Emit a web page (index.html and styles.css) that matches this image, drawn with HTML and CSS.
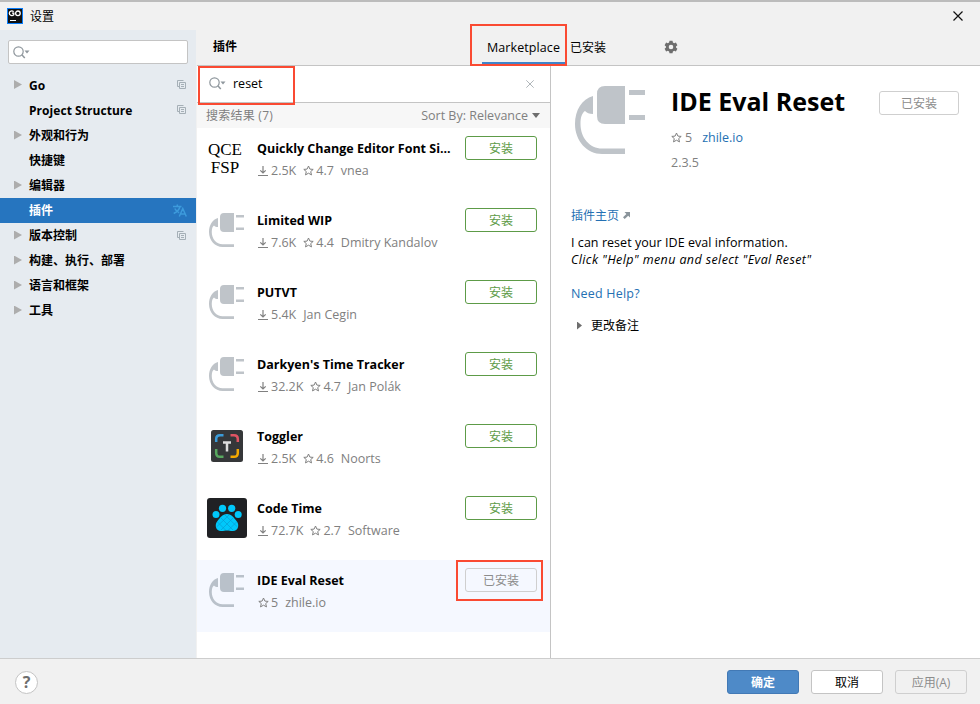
FILE: index.html
```html
<!DOCTYPE html>
<html lang="zh-CN">
<head>
<meta charset="utf-8">
<title>设置</title>
<link rel="stylesheet" href="styles.css">
</head>
<body>
<svg class="defs" aria-hidden="true">
  <symbol id="plug" viewBox="0 0 70 68"><path d="M50 0H30Q22 0 22 8V30Q22 38 30 38H50ZM54 4H70V9H54ZM54 29H70V34H54ZM18 10C7 13 0 24 0 38C0 55 12 68 27 68H50V62.500H27C15 62.500 5.500 52 5.500 38C5.500 31 7 27 10 25C12 27 14 28 18 28Z" fill="currentColor"/></symbol>
  <symbol id="star" viewBox="0 0 11 11"><path d="M5.500 1L6.900 4.100L10.200 4.400L7.700 6.600L8.500 9.900L5.500 8.200L2.500 9.900L3.300 6.600L.8 4.400L4.100 4.100Z" fill="none" stroke="currentColor"/></symbol>
  <symbol id="down" viewBox="0 0 10 10"><path d="M5 0V7M2.300 4.300L5 7L7.700 4.300M0 9.500H10" fill="none" stroke="currentColor" stroke-width="1.200"/></symbol>
  <symbol id="copy" viewBox="0 0 9 9"><path d="M2.500 2.500H8.500V8.500H2.500ZM6.500 .5H.5V6.500H2.500M4 4.500H7M4 6.500H7" fill="none" stroke="#a5afb6"/></symbol>
  <symbol id="search" viewBox="0 0 17 13"><circle cx="5.500" cy="5.500" r="4.700" fill="none" stroke="#8f979d" stroke-width="1.200"/><path d="M9 9L11.800 12" stroke="#8f979d" stroke-width="1.500"/><path d="M11.500 4.500H16.500L14 7.500Z" fill="#8f979d"/></symbol>
</svg>
<div class="window">
  <header class="titlebar">
    <svg class="logo" viewBox="0 0 16 16"><path d="M0 0H16V16H0Z" fill="#087cfa"/><path d="M1 1H15V15H1Z" fill="#111"/><path d="M6.600 3.700C5.200 2.200 2.300 2.900 2.300 5.200C2.300 7.700 5.300 8.200 6.800 6.700V5.200H5" fill="none" stroke="#fff" stroke-width="1.300"/><circle cx="10.900" cy="5.300" r="2.300" fill="none" stroke="#fff" stroke-width="1.300"/><path d="M3 12.500H9" stroke="#fff"/></svg>
    <span class="title">设置</span>
    <svg class="close" viewBox="0 0 10 10"><path d="M.5 .5L9.500 9.500M9.500 .5L.5 9.500" stroke="#111" stroke-width="1.200"/></svg>
  </header>
  <div class="main">
    <aside class="sidebar">
      <div class="side-search"><svg class="mag"><use href="#search"/></svg></div>
      <nav class="tree">
        <div class="node latin"><i class="arrow"></i><span>Go</span><svg class="copy"><use href="#copy"/></svg></div>
        <div class="node latin"><i class="arrow none"></i><span>Project Structure</span><svg class="copy"><use href="#copy"/></svg></div>
        <div class="node"><i class="arrow"></i><span>外观和行为</span></div>
        <div class="node"><i class="arrow none"></i><span>快捷键</span></div>
        <div class="node"><i class="arrow"></i><span>编辑器</span></div>
        <div class="node selected"><i class="arrow none"></i><span>插件</span><svg class="translate" viewBox="0 0 14 13"><path d="M0 2.500H8.500M4.300 .5V2.500M7 2.500C6.300 5.500 3.800 8 .7 9.500M1.800 4.500C2.700 6.500 4.500 8 6.200 8.700M6.300 12.500L9.800 4.500L13.300 12.500M7.500 10H12" fill="none" stroke="#3d9bdc" stroke-width="1.500"/></svg></div>
        <div class="node"><i class="arrow"></i><span>版本控制</span><svg class="copy"><use href="#copy"/></svg></div>
        <div class="node"><i class="arrow"></i><span>构建、执行、部署</span></div>
        <div class="node"><i class="arrow"></i><span>语言和框架</span></div>
        <div class="node"><i class="arrow"></i><span>工具</span></div>
      </nav>
    </aside>
    <section class="content">
      <div class="tabs">
        <b class="heading">插件</b>
        <span class="tab active">Marketplace</span>
        <span class="tab installed">已安装</span>
        <svg class="gear" viewBox="0 0 14 14"><path fill-rule="evenodd" d="M5.500 .7H8.500L8.900 2.500L10.200 3.200L11.900 2.600L13.400 5.200L12 6.400V7.600L13.400 8.800L11.900 11.400L10.200 10.800L8.900 11.500L8.500 13.300H5.500L5.100 11.500L3.800 10.800L2.100 11.400L.6 8.800L2 7.600V6.400L.6 5.200L2.100 2.600L3.800 3.200L5.100 2.500ZM7 4.700A2.300 2.300 0 1 0 7 9.300A2.300 2.300 0 1 0 7 4.700Z" fill="#6e6e6e"/></svg>
      </div>
      <div class="panes">
        <div class="list">
          <div class="query"><svg class="mag"><use href="#search"/></svg><span>reset</span><svg class="clear" viewBox="0 0 8 8"><path d="M.3 .3L7.700 7.700M7.700 .3L.3 7.700" stroke="#b0b6ba"/></svg></div>
          <div class="results"><span>搜索结果 (7)</span><span class="sort">Sort By: Relevance</span><i class="caret"></i></div>
          <div class="row"><div class="icon qce"><span>QCE</span><span>FSP</span></div><div class="info"><b>Quickly Change Editor Font Si...</b><p><svg class="down"><use href="#down"/></svg><span>2.5K</span><svg class="star"><use href="#star"/></svg><span>4.7</span><span>vnea</span></p></div><button class="btn green">安装</button></div>
          <div class="row"><div class="icon"><svg class="plug"><use href="#plug"/></svg></div><div class="info"><b>Limited WIP</b><p><svg class="down"><use href="#down"/></svg><span>7.6K</span><svg class="star"><use href="#star"/></svg><span>4.4</span><span>Dmitry Kandalov</span></p></div><button class="btn green">安装</button></div>
          <div class="row"><div class="icon"><svg class="plug"><use href="#plug"/></svg></div><div class="info"><b>PUTVT</b><p><svg class="down"><use href="#down"/></svg><span>5.4K</span><span>Jan Cegin</span></p></div><button class="btn green">安装</button></div>
          <div class="row"><div class="icon"><svg class="plug"><use href="#plug"/></svg></div><div class="info"><b>Darkyen's Time Tracker</b><p><svg class="down"><use href="#down"/></svg><span>32.2K</span><svg class="star"><use href="#star"/></svg><span>4.7</span><span>Jan Polák</span></p></div><button class="btn green">安装</button></div>
          <div class="row"><div class="icon"><svg class="full" viewBox="0 0 40 40"><rect x="4" y="4" width="32" height="32" rx="2.500" fill="#353739"/><g fill="none" stroke-width="2.500"><path d="M9.200 16V13Q9.200 9.200 13 9.200H16.500" stroke="#3b9bd8"/><path d="M23.500 9.200H27Q30.800 9.200 30.800 13V16" stroke="#e05463"/><path d="M9.200 23V27Q9.200 30.800 13 30.800H16.500" stroke="#58a75f"/><path d="M30.800 23V27Q30.800 30.800 27 30.800H23.500" stroke="#f4a900"/><path d="M16 16.500H24M20 16V25.500" stroke="#ddd"/></g></svg></div><div class="info"><b>Toggler</b><p><svg class="down"><use href="#down"/></svg><span>2.5K</span><svg class="star"><use href="#star"/></svg><span>4.6</span><span>Noorts</span></p></div><button class="btn green">安装</button></div>
          <div class="row"><div class="icon"><svg class="full" viewBox="0 0 40 40"><rect width="40" height="40" rx="3" fill="#202124"/><g fill="#00c8fa"><circle cx="9" cy="16.500" r="3.500"/><circle cx="15.500" cy="10.300" r="3.600"/><circle cx="24.700" cy="10.300" r="3.600"/><circle cx="31.200" cy="16.500" r="3.500"/><path d="M20 16C25 16 27 20 29.500 23C33 27 31 33 26 33C23 33 22 32.500 20 32.500S17 33 14 33C9 33 7 27 10.500 23C13 20 15 16 20 16Z"/></g><path d="M14 20L26 32M10.500 24L19 32.500M18 17L30.500 29M26 20L14 32M22 17L9.500 29M29.500 24L21 32.500" stroke="#0797ce" stroke-width=".6"/></svg></div><div class="info"><b>Code Time</b><p><svg class="down"><use href="#down"/></svg><span>72.7K</span><svg class="star"><use href="#star"/></svg><span>2.7</span><span>Software</span></p></div><button class="btn green">安装</button></div>
          <div class="row current"><div class="icon"><svg class="plug"><use href="#plug"/></svg></div><div class="info"><b>IDE Eval Reset</b><p><svg class="star"><use href="#star"/></svg><span>5</span><span>zhile.io</span></p></div><button class="btn gray">已安装</button></div>
        </div>
        <div class="detail">
          <div class="summary">
            <svg class="plug-big"><use href="#plug"/></svg>
            <div class="about"><h1>IDE Eval Reset</h1><p class="rating"><svg class="star"><use href="#star"/></svg><span>5</span><a>zhile.io</a></p><p class="version">2.3.5</p></div>
            <button class="btn gray wide">已安装</button>
          </div>
          <div class="homepage"><a>插件主页</a><svg class="ext" viewBox="0 0 7 7"><path d="M1.500 0H7V5.500L5.200 3.700L1.700 7L0 5.300L3.400 1.900Z" fill="#8a949b"/></svg></div>
          <p class="desc">I can reset your IDE eval information.</p>
          <p class="hint">Click "Help" menu and select "Eval Reset"</p>
          <a class="help-link">Need Help?</a>
          <div class="notes"><i class="arrow-small"></i><span>更改备注</span></div>
        </div>
      </div>
    </section>
  </div>
  <footer class="footer"><span class="help">?</span><button class="action primary">确定</button><button class="action">取消</button><button class="action disabled">应用(A)</button></footer>
  <div class="mark mark-tab"></div>
  <div class="mark mark-query"></div>
  <div class="mark mark-button"></div>
</div>
</body>
</html>
```
FILE: styles.css
```css
* { box-sizing: border-box; }
body { margin: 0; font: 12.5px/17px "Open Sans", "Noto Sans CJK SC", sans-serif; color: #000; }
p, h1 { margin: 0; }
svg { display: block; flex: none; }
button { font: inherit; padding: 0; margin: 0; }
a { color: #2470b3; }
.defs { position: absolute; width: 0; height: 0; }
.window { position: relative; width: 980px; height: 704px; display: flex; flex-direction: column; overflow: hidden; background: #f1f1f1; }
.titlebar { height: 30px; border-top: 2px solid #777; border-image: linear-gradient(#bcbcbc 50%, #707070 50%) 2; display: flex; align-items: center; padding: 0 17px 0 7px; }
.logo { width: 16px; height: 16px; }
.title { margin-left: 7px; font-size: 12px; }
.close { width: 10px; height: 10px; margin-left: auto; }
.main { display: flex; height: 628px; }
.sidebar { width: 196px; background: #e6ebf0; padding-top: 10px; }
.side-search { width: 180px; height: 24px; margin: 0 8px 9px; background: #fff; border: 1px solid #c4c4c4; border-radius: 2px; padding: 5px 4px; }
.mag { width: 17px; height: 13px; }
.node { height: 25px; display: flex; align-items: center; padding: 0 10px 1px 14px; font-size: 12px; font-weight: 700; }
.node span { padding-top: 1px; }
.latin { padding-bottom: 2px; letter-spacing: .05px; }
.arrow { width: 8px; height: 9px; margin-right: 7px; background: #adadad; clip-path: polygon(0 0, 100% 50%, 0 100%); }
.arrow.none { visibility: hidden; }
.copy { width: 9px; height: 9px; margin-left: auto; }
.selected { background: #2675bf; color: #fff; }
.translate { width: 14px; height: 13px; margin-left: auto; margin-right: -1px; }
.content { flex: 1; border-left: 1px solid #f1f1f1; }
.tabs { height: 36px; border-bottom: 1px solid #c4c4c4; display: flex; padding-left: 16px; }
.heading { width: 269px; font-size: 12px; padding-top: 8px; }
.tab { padding-top: 9px; }
.active { width: 84px; height: 35px; padding-left: 5px; border-bottom: 3px solid #4083c9; white-space: nowrap; letter-spacing: .08px; }
.installed { width: 98px; padding-left: 4px; font-size: 12px; }
.gear { width: 14px; height: 14px; margin-top: 10px; }
.panes { display: flex; height: 592px; background: #fff; }
.list { width: 354px; border-right: 1px solid #c4c4c4; }
.query { height: 37px; border-bottom: 1px solid #c4c4c4; display: flex; align-items: center; padding: 0 16px 1px 12px; }
.query span { margin-left: 7px; }
.clear { width: 8px; height: 8px; margin-left: auto; }
.results { height: 25px; background: #f7f7f7; color: #808080; display: flex; align-items: center; padding: 0 10px 0 9px; }
.results span:first-child { font-size: 12px; letter-spacing: .25px; }
.sort { margin-left: auto; }
.caret { width: 8px; height: 5px; margin-left: 4px; background: #6e6e6e; clip-path: polygon(0 0, 100% 0, 50% 100%); }
.row { height: 72px; display: flex; padding: 8px 13px 0 10px; }
.current { background: #f5f8ff; }
.icon { width: 40px; height: 40px; margin-top: 2px; }
.plug { width: 35px; height: 34px; margin: 3px 0 0 2px; color: #bfc4c9; }
.full { width: 40px; height: 40px; }
.current .plug { color: #b9c1ca; }
.qce { font: 17px/18px "Liberation Serif", serif; text-align: center; padding-top: 3px; margin-left: -2px; margin-right: 2px; }
.qce span { display: block; }
.info { width: 218px; padding: 4px 0 0 10px; white-space: nowrap; }
.info b { display: block; font-size: 12.5px; }
.info p { display: flex; align-items: center; margin-top: 5px; color: #808080; padding-left: 1px; }
.info .down { width: 10px; height: 10px; margin-right: 3px; }
.star { width: 11px; height: 11px; margin-right: 2px; color: #808080; }
.info span { margin-right: 7px; }
.btn { width: 72px; height: 24px; border-radius: 3px; background: #fff; font-size: 12px; line-height: 20px; padding-top: 2px; }
.green { border: 1px solid #5d9b47; color: #5d9b47; }
.gray { border: 1px solid #cfcfcf; color: #8c8c8c; }
.current .btn { background: #f5f8ff; }
.detail { flex: 1; padding: 20px 20px 0; }
.summary { display: flex; height: 121px; }
.plug-big { width: 70px; height: 68px; margin: 0 26px 0 4px; color: #bfc4c9; }
.about { width: 208px; color: #808080; }
.about h1 { color: #000; font-size: 25px; line-height: 30px; white-space: nowrap; }
.rating { display: flex; align-items: center; margin-top: 13px; }
.rating span { margin-left: 1px; }
.rating a { margin-left: 10px; }
.version { margin-top: 8px; }
.wide { width: 80px; margin-top: 5px; }
.homepage { display: flex; align-items: center; font-size: 12px; }
.ext { width: 7px; height: 7px; margin-left: 4px; }
.desc { margin-top: 10px; letter-spacing: .05px; }
.hint { font-style: italic; letter-spacing: .39px; }
.help-link { display: block; margin-top: 17px; letter-spacing: .2px; }
.notes { display: flex; align-items: center; margin-top: 15px; padding-left: 6px; font-size: 12px; }
.arrow-small { width: 5px; height: 8px; margin-right: 9px; background: #6e6e6e; clip-path: polygon(0 0, 100% 50%, 0 100%); }
.footer { height: 46px; border-top: 1px solid #cdcdcd; display: flex; align-items: center; gap: 12px; padding: 0 13px 0 15px; }
.help { width: 23px; height: 23px; margin: 1px auto 0 0; border: 1px solid #c4c4c4; border-radius: 50%; background: #fff; color: #6e6e6e; font: 700 16px/21px "Open Sans", sans-serif; text-align: center; }
.action { width: 72px; height: 24px; border: 1px solid #c4c4c4; border-radius: 3px; background: #fff; color: #000; font-size: 12px; line-height: 20px; padding-top: 2px; }
.primary { background: #4e8ac8; border-color: #4279b5; color: #fff; font-weight: 700; }
.disabled { background: #f1f1f1; border-color: #cfcfcf; color: #8c8c8c; }
.mark { position: absolute; border: 2px solid #fa4a32; }
.mark-tab { left: 470px; top: 24px; width: 97px; height: 42px; }
.mark-query { left: 198px; top: 66px; width: 97px; height: 39px; }
.mark-button { left: 456px; top: 560px; width: 87px; height: 41px; }
```
